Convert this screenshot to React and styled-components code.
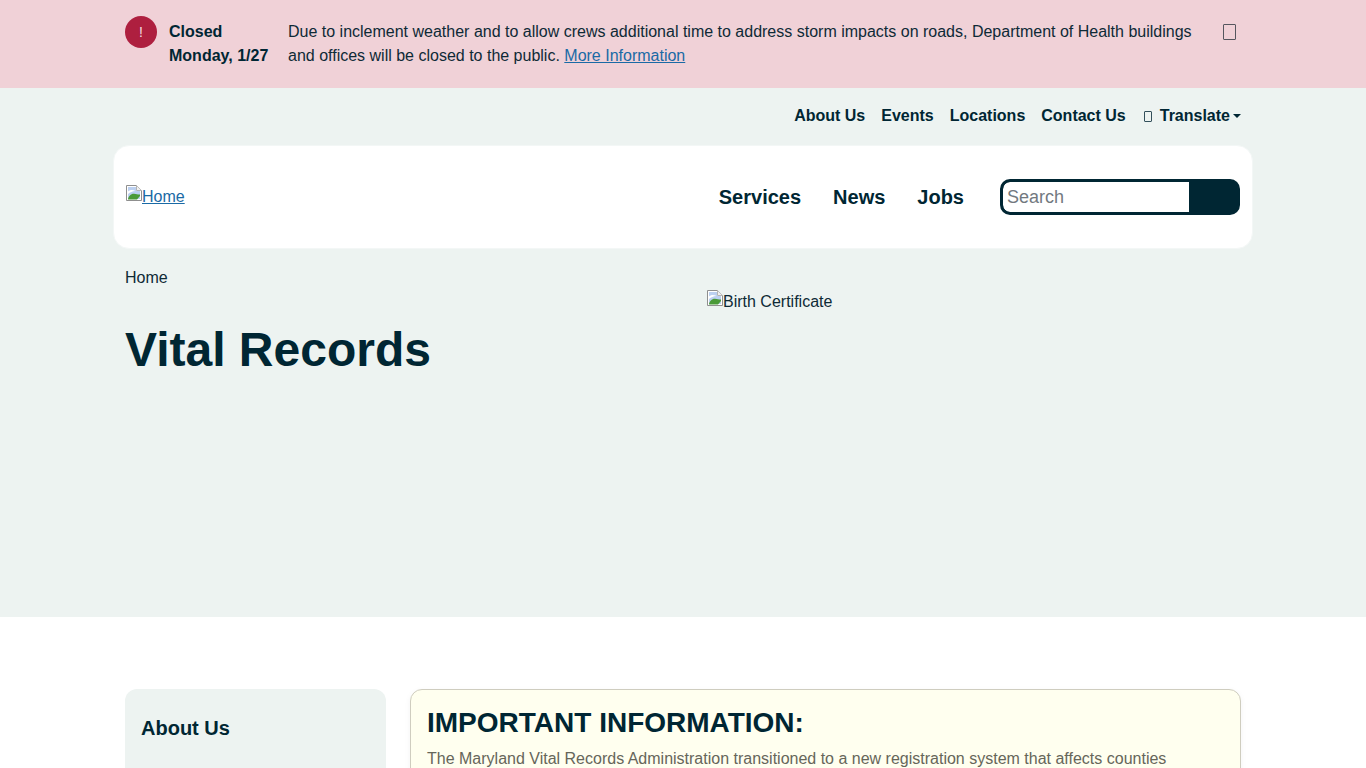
import React from 'react';
import styled, { createGlobalStyle } from 'styled-components';

const Global = createGlobalStyle`
  html, body { margin: 0; padding: 0; height: 768px; overflow: hidden; background: #fff; }
  body { font: 16px/24px "Liberation Sans", Arial, sans-serif; color: #002633; }
  * { box-sizing: border-box; }
`;

const Container = styled.div`
  width: 1140px;
  margin: 0 auto;
  padding: 0 12px;
`;

const AlertBar = styled.section`
  height: 88px;
  background: #f0d1d7;
  padding-top: 16px;
`;
const AlertRow = styled.div`
  display: flex;
  align-items: flex-start;
`;
const AlertBadge = styled.span`
  flex: none;
  width: 32px;
  height: 32px;
  border-radius: 50%;
  background: #ae1f3f;
  color: #f5dfe3;
  font-size: 14px;
  line-height: 32px;
  text-align: center;
  margin-right: 12px;
`;
const AlertDate = styled.strong`
  flex: none;
  width: 119px;
  font-weight: 700;
  color: #002633;
  padding-top: 4px;
`;
const AlertText = styled.p`
  flex: none;
  width: 920px;
  margin: 4px 0 0;
  color: #0e2a36;
`;
const TextLink = styled.a`
  color: #1a6aa5;
  text-decoration: underline;
`;
const Tofu = styled.span`
  display: inline-block;
  flex: none;
  width: ${p => p.$w}px;
  height: ${p => p.$h}px;
  border: 1px solid ${p => p.$c};
  border-radius: 1px;
`;
const CloseSlot = styled.span`
  display: flex;
  margin: 8px 0 0 15px;
`;

const Hero = styled.div`
  height: 529px;
  background: #edf3f1;
`;
const UtilityNav = styled.nav`
  display: flex;
  justify-content: flex-end;
  align-items: center;
  height: 57px;
  padding-bottom: 1px;
  gap: 16px;
`;
const UtilityLink = styled.a`
  display: flex;
  align-items: center;
  font-weight: 700;
  color: #002633;
`;
const TranslateLink = styled(UtilityLink)`
  margin-left: 2px;
  gap: 8px;
`;
const Caret = styled.span`
  width: 0;
  height: 0;
  margin-left: -5px;
  border-top: 4px solid #002633;
  border-left: 4px solid transparent;
  border-right: 4px solid transparent;
`;

const HeaderCard = styled.header`
  display: flex;
  align-items: center;
  justify-content: space-between;
  width: 1140px;
  margin-left: -12px;
  height: 104px;
  padding: 0 12px;
  background: #fff;
  border: 1px solid #f3f7f6;
  border-radius: 16px;
`;
const LogoLink = styled.a`
  display: flex;
  align-items: flex-start;
  color: #1a6aa5;
  text-decoration: underline;
`;
const BrokenIcon = styled.svg`
  flex: none;
  width: 16px;
  height: 16px;
`;
const MainNav = styled.nav`
  display: flex;
  align-items: center;
`;
const MainLink = styled.a`
  font-size: 20px;
  font-weight: 700;
  color: #002633;
  margin-right: 32px;
  &:last-of-type { margin-right: 36px; }
`;
const SearchForm = styled.form`
  display: flex;
  width: 240px;
  height: 36px;
  border-radius: 10px;
  border: 3px solid #002633;
  background: #002633;
  overflow: hidden;
`;
const SearchInput = styled.input`
  flex: none;
  width: 186px;
  height: 30px;
  border: 0;
  border-radius: 7px 0 0 7px;
  outline: 0;
  padding: 0 4px;
  background: #fff;
  font: 18px "Liberation Sans", Arial, sans-serif;
  &::placeholder { color: #72797f; opacity: 1; }
`;

const HeroGrid = styled.div`
  display: grid;
  grid-template-columns: 582px 1fr;
`;
const Crumb = styled.div`
  padding-top: 17px;
  color: #0e2a36;
`;
const PageTitle = styled.h1`
  margin: 31px 0 0;
  font-size: 48px;
  line-height: 58px;
  font-weight: 700;
  color: #002633;
`;
const HeroImage = styled.div`
  display: flex;
  align-items: flex-start;
  padding-top: 41px;
  color: #0e2a36;
  line-height: 24px;
`;

const Main = styled(Container)`
  display: grid;
  grid-template-columns: 261px 831px;
  column-gap: 24px;
  padding-top: 72px;
`;
const SideCard = styled.aside`
  height: 200px;
  padding: 24px 16px;
  background: #edf3f1;
  border-radius: 12px;
`;
const SideTitle = styled.h2`
  margin: 0;
  font-size: 20px;
  line-height: 30px;
  font-weight: 700;
  color: #002633;
`;
const Notice = styled.section`
  height: 200px;
  padding: 16px 16px;
  background: #ffffef;
  border: 1px solid #cfcdbf;
  border-radius: 12px;
  box-shadow: 0 2px 6px rgba(0, 0, 0, .05);
`;
const NoticeTitle = styled.h2`
  margin: 0 0 7px;
  font-size: 28px;
  line-height: 34px;
  font-weight: 700;
  color: #002633;
`;
const NoticeText = styled.p`
  margin: 0;
  color: #66665a;
`;

const Broken = () => (
  <BrokenIcon viewBox="0 0 16 16" aria-hidden="true">
    <path d="M.5.5h10l5 5v10H.5z" fill="#fff" stroke="#8f8f8f" />
    <path d="M10.5.5v5h5" fill="#f0f0f0" stroke="#b5b5b5" />
    <path d="M2 2h8v4h4v8H2z" fill="#bcd0f0" />
    <path d="M2 6.500C4 4.500 7 4.500 9.500 6 6.500 6.300 4 7.200 2 9z" fill="#fff" />
    <path d="M2 14.500c.4-3.400 3-6 6-5.800 2.500.2 4 1 6 .8v1.500l-3 3.500z" fill="#4a9a38" />
  </BrokenIcon>
);

export default function App() {
  return (
    <>
      <Global />
      <AlertBar>
        <Container>
          <AlertRow>
            <AlertBadge>!</AlertBadge>
            <AlertDate>Closed<br />Monday, 1/27</AlertDate>
            <AlertText>
              Due to inclement weather and to allow crews additional time to address storm impacts on roads, Department of Health buildings and offices will be closed to the public. <TextLink>More Information</TextLink>
            </AlertText>
            <CloseSlot><Tofu $w={13} $h={16} $c="#55565e" /></CloseSlot>
          </AlertRow>
        </Container>
      </AlertBar>
      <Hero>
        <Container>
          <UtilityNav>
            <UtilityLink>About Us</UtilityLink>
            <UtilityLink>Events</UtilityLink>
            <UtilityLink>Locations</UtilityLink>
            <UtilityLink>Contact Us</UtilityLink>
            <TranslateLink><Tofu $w={8} $h={11} $c="#33505b" />Translate<Caret /></TranslateLink>
          </UtilityNav>
          <HeaderCard>
            <LogoLink><Broken />Home</LogoLink>
            <MainNav>
              <MainLink>Services</MainLink>
              <MainLink>News</MainLink>
              <MainLink>Jobs</MainLink>
              <SearchForm>
                <SearchInput placeholder="Search" />
              </SearchForm>
            </MainNav>
          </HeaderCard>
          <HeroGrid>
            <div>
              <Crumb>Home</Crumb>
              <PageTitle>Vital Records</PageTitle>
            </div>
            <HeroImage><Broken />Birth Certificate</HeroImage>
          </HeroGrid>
        </Container>
      </Hero>
      <Main>
        <SideCard><SideTitle>About Us</SideTitle></SideCard>
        <Notice>
          <NoticeTitle>IMPORTANT INFORMATION:</NoticeTitle>
          <NoticeText>The Maryland Vital Records Administration transitioned to a new registration system that affects counties</NoticeText>
        </Notice>
      </Main>
    </>
  );
}
